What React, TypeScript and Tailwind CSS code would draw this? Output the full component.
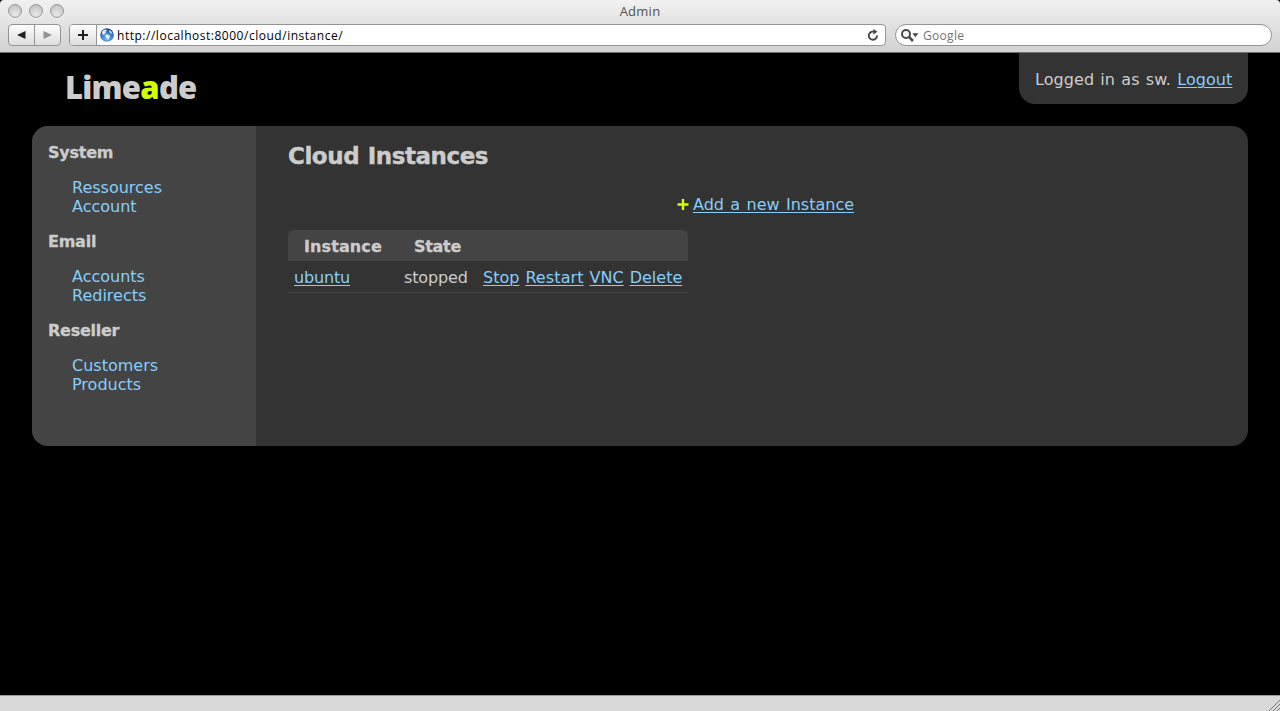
import React from "react";

const sections = [
  { title: "System", links: ["Ressources", "Account"] },
  { title: "Email", links: ["Accounts", "Redirects"] },
  { title: "Reseller", links: ["Customers", "Products"] },
];

function WindowLight() {
  return (
    <span className="h-[14px] w-[14px] rounded-full border border-[#979797] bg-[radial-gradient(circle_at_50%_75%,#e9e9e9_0%,#d2d2d2_50%,#b8b8b8_100%)] shadow-[0_1px_0_#fafafa]" />
  );
}

function Globe() {
  return (
    <svg width="14" height="14" viewBox="0 0 14 14" className="shrink-0">
      <defs>
        <radialGradient id="sea" cx="50%" cy="75%" r="70%">
          <stop offset="0" stopColor="#7cc4f6" />
          <stop offset="0.55" stopColor="#3b80cd" />
          <stop offset="1" stopColor="#1f478b" />
        </radialGradient>
      </defs>
      <circle cx="7" cy="7" r="6.8" fill="url(#sea)" />
      <path d="M1.8 4 3.6 2 6 1.5 7 2.5 5.6 3.6 6 4.8 4.6 5.8 4.2 7 2.6 6.4Z" fill="#dcecfa" />
      <path d="M5.4 6.8 8 6.6 10 8 9 10 7.8 12.3 7 10.3 5.6 8.8Z" fill="#eef7fd" />
      <path d="M9 2 11.2 3.3 12.4 5.6 10.6 5.6 9.3 4Z" fill="#b9d8f4" />
    </svg>
  );
}

function BrowserBar() {
  return (
    <header className="h-[53px] rounded-t-[4px] border-b border-[#6f6f6f] bg-linear-to-b from-[#f1f1f1] to-[#d2d2d2] font-['Open_Sans','Noto_Sans',sans-serif]">
      <div className="grid h-6 grid-cols-[1fr_auto_1fr] items-center px-2">
        <div className="flex gap-[7px] pb-[2px]">
          <WindowLight />
          <WindowLight />
          <WindowLight />
        </div>
        <span className="pb-[1px] text-[13px] leading-none tracking-[0.25px] text-[#505050]">Admin</span>
      </div>
      <div className="flex h-[22px] px-2">
        <div className="flex w-[53px] rounded-[4px] border border-[#949494] bg-linear-to-b from-[#fdfdfd] to-[#dedede]">
          <span className="flex w-[26px] items-center justify-center border-r border-[#949494]">
            <svg width="9" height="8" viewBox="0 0 9 8"><path d="M0 4 8.5 0v8z" fill="#222" /></svg>
          </span>
          <span className="flex flex-1 items-center justify-center">
            <svg width="9" height="8" viewBox="0 0 9 8"><path d="M9 4 .5 0v8z" fill="#929292" /></svg>
          </span>
        </div>
        <div className="ml-2 flex w-[817px] overflow-hidden rounded-[4px] border border-[#949494] bg-white">
          <span className="flex w-[27px] items-center justify-center border-r border-[#949494] bg-linear-to-b from-[#fdfdfd] to-[#dedede]">
            <svg width="12" height="12" viewBox="0 0 12 12" className="mb-px"><path d="M6 1v10M1 6h10" stroke="#222" strokeWidth="2" /></svg>
          </span>
          <span className="flex flex-1 items-center pl-[3px]">
            <Globe />
            <span className="ml-[3px] pt-[2px] text-[12px] leading-none tracking-[0.52px] text-black">http://localhost:8000/cloud/instance/</span>
          </span>
          <svg width="12" height="12" viewBox="0 0 12 12" className="mt-[4px] mr-[6px]">
            <path d="M10 6.4a4.1 4.1 0 1 1-4-3.8h1.6" fill="none" stroke="#484848" strokeWidth="1.9" />
            <path d="M6.4 0 10.4 2.8 6.4 5.4z" fill="#484848" />
          </svg>
        </div>
        <div className="ml-[9px] flex w-[377px] items-center rounded-full border border-[#949494] bg-white pl-[5px]">
          <svg width="18" height="13" viewBox="0 0 18 13">
            <circle cx="5" cy="5" r="4" fill="none" stroke="#484848" strokeWidth="2" />
            <path d="M7.7 7.7 12 12" stroke="#484848" strokeWidth="2.5" />
            <path d="M11.4 4.3h6l-3 3.9z" fill="#484848" />
          </svg>
          <span className="ml-1 pt-[2px] text-[12px] leading-none tracking-[0.3px] text-[#737373]">Google</span>
        </div>
      </div>
    </header>
  );
}

function Link({ children, className = "" }: { children: React.ReactNode; className?: string }) {
  return <a href="#" className={`text-[#87cefa] underline decoration-1 underline-offset-2 ${className}`}>{children}</a>;
}

function Sidebar() {
  return (
    <nav className="w-56 shrink-0 bg-[#444] pt-[17px] pl-4">
      {sections.map((s) => (
        <section key={s.title} className="mb-4">
          <h2 className="mb-4 h-[19px] font-bold tracking-[-0.25px] [-webkit-text-stroke:0.3px_#ccc]">{s.title}</h2>
          <ul className="pl-6">
            {s.links.map((l) => (
              <li key={l} className="h-[19px]"><a href="#" className="text-[#87cefa]">{l}</a></li>
            ))}
          </ul>
        </section>
      ))}
    </nav>
  );
}

export default function App() {
  return (
    <div className="flex h-[711px] w-[1280px] flex-col overflow-hidden bg-black">
      <BrowserBar />
      <div className="flex-1 px-8 font-['DejaVu_Sans',Verdana,sans-serif] text-[16px] leading-[19px] text-[#ccc]">
        <div className="flex h-[73px] items-start justify-between">
          <h1 className="mt-[14px] ml-[33px] font-['Open_Sans','Noto_Sans',sans-serif] text-[31px] leading-[40px] font-extrabold tracking-[-0.75px]">
            Lime<span className="text-[#d4ff00]">a</span>de
          </h1>
          <div className="h-[51px] w-[229px] rounded-b-2xl bg-[#333] pt-[17px] pl-4 tracking-[0.06px] [word-spacing:1.1px] whitespace-nowrap">
            Logged in as sw. <Link>Logout</Link>
          </div>
        </div>
        <div className="flex h-80 overflow-hidden rounded-2xl bg-[#333]">
          <Sidebar />
          <main className="flex-1 px-8 pt-4">
            <h2 className="text-[23px] leading-[29px] font-bold tracking-[-0.45px] [word-spacing:1px] [-webkit-text-stroke:0.4px_#ccc]">Cloud Instances</h2>
            <div className="mt-[24px] flex items-center pl-[389px] whitespace-nowrap">
              <svg width="12" height="12" viewBox="0 0 12 12" className="mr-1"><path d="M6 0v11M.5 5.5h11" stroke="#d4ff00" strokeWidth="2.4" /></svg>
              <Link className="[word-spacing:1.3px]">Add a new Instance</Link>
            </div>
            <div className="mt-4 w-[400px] whitespace-nowrap">
              <div className="grid h-[31px] grid-cols-[110px_1fr] items-center rounded-t-md bg-[#444] pt-px pl-4 font-bold tracking-[-0.3px] [-webkit-text-stroke:0.3px_#ccc]">
                <span className="tracking-[0.1px]">Instance</span><span>State</span>
              </div>
              <div className="grid h-8 grid-cols-[110px_79px_1fr] items-center border-b border-[#444] pt-[2px] pl-[6px]">
                <span className="tracking-[-0.15px]"><Link>ubuntu</Link></span>
                <span className="tracking-[-0.12px]">stopped</span>
                <span className="flex gap-[6px]">
                  <Link>Stop</Link><Link className="tracking-[0.1px]">Restart</Link><Link>VNC</Link><Link>Delete</Link>
                </span>
              </div>
            </div>
          </main>
        </div>
      </div>
      <footer className="flex h-4 items-end justify-end border-t border-[#999] bg-[#d9d9d9]">
        <svg width="12" height="12" viewBox="0 0 12 12"><path d="M1 12 12 1M5 12l7-7M9 12l3-3" stroke="#777" strokeWidth="1" /></svg>
      </footer>
    </div>
  );
}
